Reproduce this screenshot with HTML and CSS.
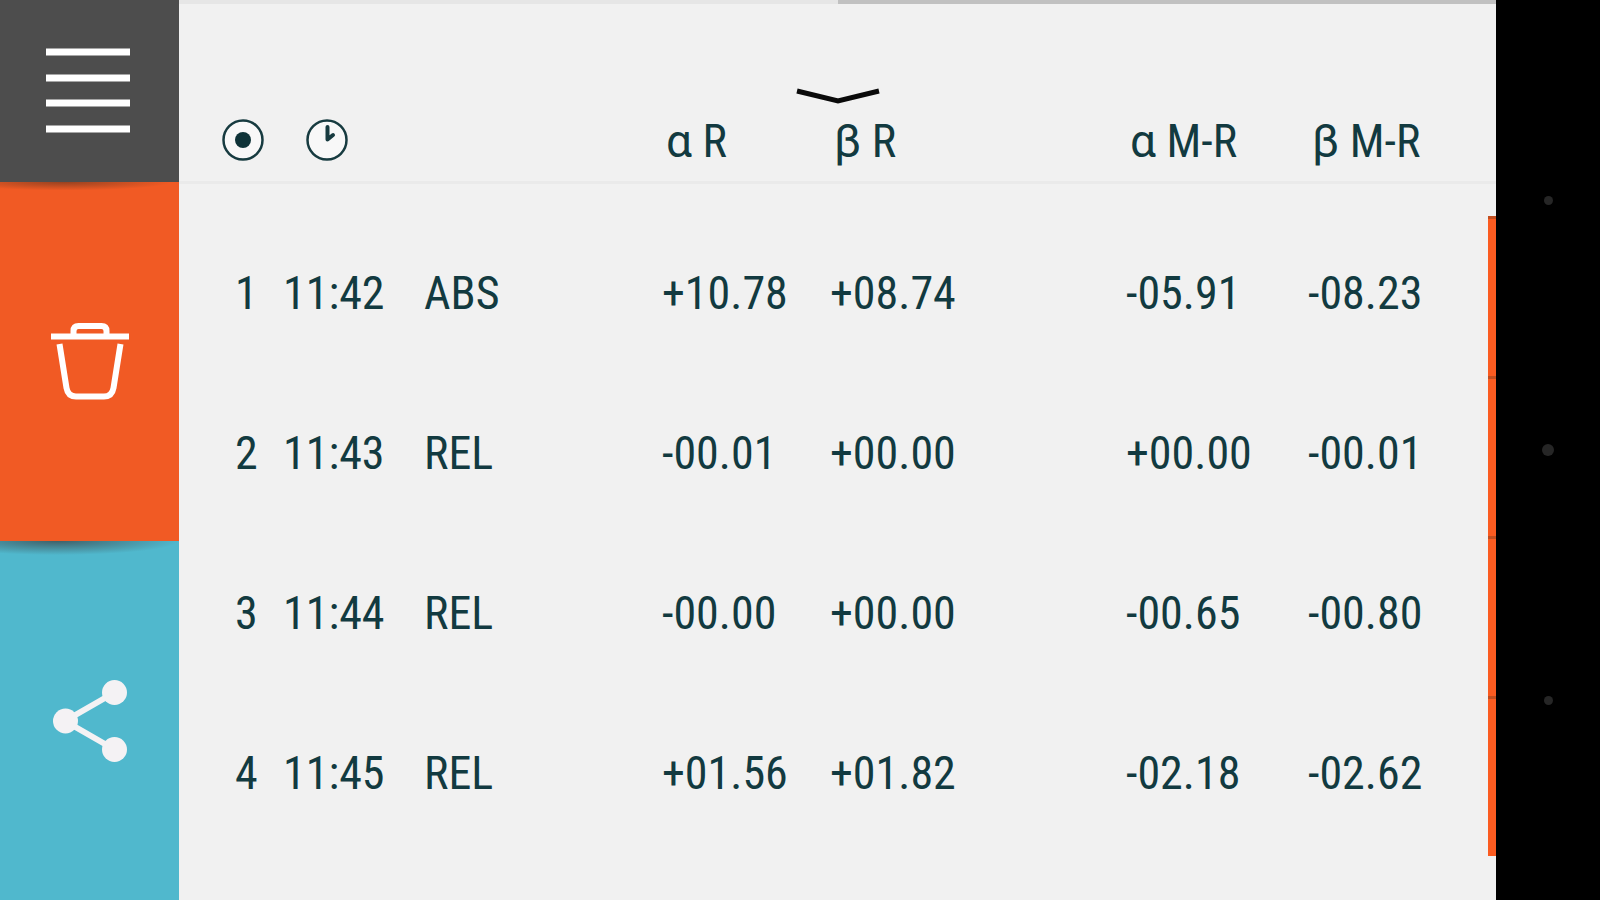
FILE: index.html
```html
<!DOCTYPE html>
<html lang="en">
<head>
    <meta charset="UTF-8">
    <meta name="viewport" content="width=device-width, initial-scale=1.0">
    <title>Measurements</title>
    <link rel="stylesheet" href="styles.css">
</head>
<body>
    <div class="app">
        <div class="sidebar">
            <button class="side-btn menu" aria-label="Menu">
                <svg width="84" height="86" viewBox="0 0 84 86" stroke="#fff" stroke-width="7">
                    <path d="M0 4H84M0 30H84M0 55H84M0 81H84"/>
                </svg>
            </button>
            <button class="side-btn delete" aria-label="Delete">
                <svg width="78" height="80" viewBox="0 0 78 80" fill="none" stroke="#fff" stroke-width="6">
                    <path d="M0 14.500H78"/>
                    <path d="M22.500 14V9Q22.500 4 27.500 4H50.500Q55.500 4 55.500 9V14"/>
                    <path d="M8.500 22L15.500 66Q17 74.500 25 74.500H53Q61 74.500 62.500 66L69.500 22"/>
                </svg>
            </button>
            <button class="side-btn share" aria-label="Share">
                <svg width="74" height="82" viewBox="0 0 74 82" fill="#f4f2f4">
                    <path d="M61.500 12.500L12 41L61.500 69.500" fill="none" stroke="#f4f2f4" stroke-width="6"/>
                    <circle cx="61.500" cy="12.500" r="12.500"/>
                    <circle cx="12.500" cy="41" r="12.500"/>
                    <circle cx="61.500" cy="69.500" r="12.500"/>
                </svg>
            </button>
        </div>

        <div class="content">
            <div class="pager"><span></span><span class="on"></span></div>
            <button class="pull" aria-label="Expand">
                <svg width="84" height="17" viewBox="0 0 84 17" fill="none" stroke="#0a0a0a" stroke-width="5">
                    <path d="M1 4L42 14L83 4"/>
                </svg>
            </button>
            <table>
                <colgroup>
                    <col class="c-num"><col class="c-time"><col class="c-mode">
                    <col class="c-ar"><col class="c-br"><col class="c-amr"><col class="c-bmr">
                </colgroup>
                <thead>
                    <tr>
                        <th class="icon" aria-label="Point">
                            <svg width="42" height="42" viewBox="0 0 42 42">
                                <circle cx="21" cy="21" r="19.500" fill="#f8f8f8" stroke="#173b40" stroke-width="2.500"/>
                                <circle cx="21" cy="21" r="8" fill="#0f3338"/>
                            </svg>
                        </th>
                        <th class="icon clock" colspan="2" aria-label="Time">
                            <svg width="42" height="42" viewBox="0 0 42 42" fill="none" stroke="#173b40">
                                <circle cx="21" cy="21" r="19.500" fill="#f8f8f8" stroke-width="2.500"/>
                                <path d="M21.500 8V20.500L27 16" stroke-width="4" stroke-linecap="round" stroke-linejoin="round"/>
                            </svg>
                        </th>
                        <th><span class="greek">α</span> R</th>
                        <th><span class="greek">β</span> R</th>
                        <th><span class="greek">α</span> M-R</th>
                        <th><span class="greek">β</span> M-R</th>
                    </tr>
                </thead>
                <tbody>
                    <tr><td>1</td><td>11:42</td><td>ABS</td><td>+10.78</td><td>+08.74</td><td>-05.91</td><td>-08.23</td></tr>
                    <tr><td>2</td><td>11:43</td><td>REL</td><td>-00.01</td><td>+00.00</td><td>+00.00</td><td>-00.01</td></tr>
                    <tr><td>3</td><td>11:44</td><td>REL</td><td>-00.00</td><td>+00.00</td><td>-00.65</td><td>-00.80</td></tr>
                    <tr><td>4</td><td>11:45</td><td>REL</td><td>+01.56</td><td>+01.82</td><td>-02.18</td><td>-02.62</td></tr>
                </tbody>
            </table>
        </div>

        <div class="navbar">
            <button aria-label="Recent"><span class="dot"></span></button>
            <button aria-label="Home"><span class="dot big"></span></button>
            <button aria-label="Back"><span class="dot"></span></button>
        </div>
    </div>
</body>
</html>
```

FILE: styles.css
```css
* {
    box-sizing: border-box;
}

body {
    margin: 0;
    background: #f1f1f1;
    color: #123a40;
    font-family: "Roboto Condensed", "Liberation Sans Narrow", "Liberation Sans", sans-serif;
}

button {
    border: 0;
    padding: 0;
    background: none;
    cursor: pointer;
}

svg {
    display: block;
}

.app {
    display: flex;
    min-height: 100vh;
}

/* left buttons */
.sidebar {
    flex: 0 0 179px;
    display: flex;
    flex-direction: column;
}

.side-btn {
    flex: 1;
    display: flex;
    align-items: center;
    justify-content: center;
    background-repeat: no-repeat;
    background-size: 100% 14px;
}

.menu {
    flex: 0 0 182px;
    padding-right: 4px;
    background-color: #4d4d4d;
}

.delete {
    background-color: #f15a24;
    background-image: radial-gradient(ellipse 60% 60% at 36% 0, rgba(90, 50, 30, 0.6), transparent);
}

.share {
    background-color: #50b8cd;
    background-image: radial-gradient(ellipse 68% 100% at 32% 0, rgba(60, 75, 80, 0.8), transparent);
}

/* measurements */
.content {
    flex: 1;
    min-width: 0;
    display: flex;
    flex-direction: column;
}

.pager {
    display: flex;
    height: 4px;
}

.pager span {
    flex: 1;
    background: #e6e6e6;
}

.pager .on {
    background: #c1c1c1;
}

.pull {
    display: flex;
    justify-content: center;
    align-items: flex-end;
    height: 100px;
}

table {
    width: 100%;
    table-layout: fixed;
    border-collapse: separate;
    border-spacing: 0;
}

.c-num { width: 104px; }
.c-time { width: 141px; }
.c-mode { width: 238px; }
.c-ar { width: 168px; }
.c-br { width: 296px; }
.c-amr { width: 182px; }
.c-bmr { width: 188px; }

th,
td {
    padding: 0;
    text-align: left;
    font-size: 46px;
    line-height: 56px;
    font-weight: normal;
    white-space: nowrap;
}

th {
    height: 80px;
    padding: 0 0 4px 4px;
    border-bottom: 3px solid #eaeaea;
}

th.icon {
    padding: 0 0 6px 43px;
}

th.clock {
    padding-left: 23px;
}

.greek {
    font-family: Roboto, sans-serif;
}

tbody::before {
    content: "";
    display: block;
    height: 32px;
}

td {
    height: 160px;
    padding-bottom: 6px;
}

td:first-child {
    padding-left: 56px;
}

td:last-child {
    background: linear-gradient(#c24f20 3px, #fb5b20 3px) right / 8px 100% no-repeat;
}

/* device buttons */
.navbar {
    flex: 0 0 104px;
    display: flex;
    flex-direction: column;
    justify-content: center;
    background: #000;
}

.navbar button {
    height: 250px;
}

.dot {
    display: block;
    width: 9px;
    height: 9px;
    margin: 0 auto;
    border-radius: 50%;
    background: #262626;
}

.dot.big {
    width: 12px;
    height: 12px;
}
```
